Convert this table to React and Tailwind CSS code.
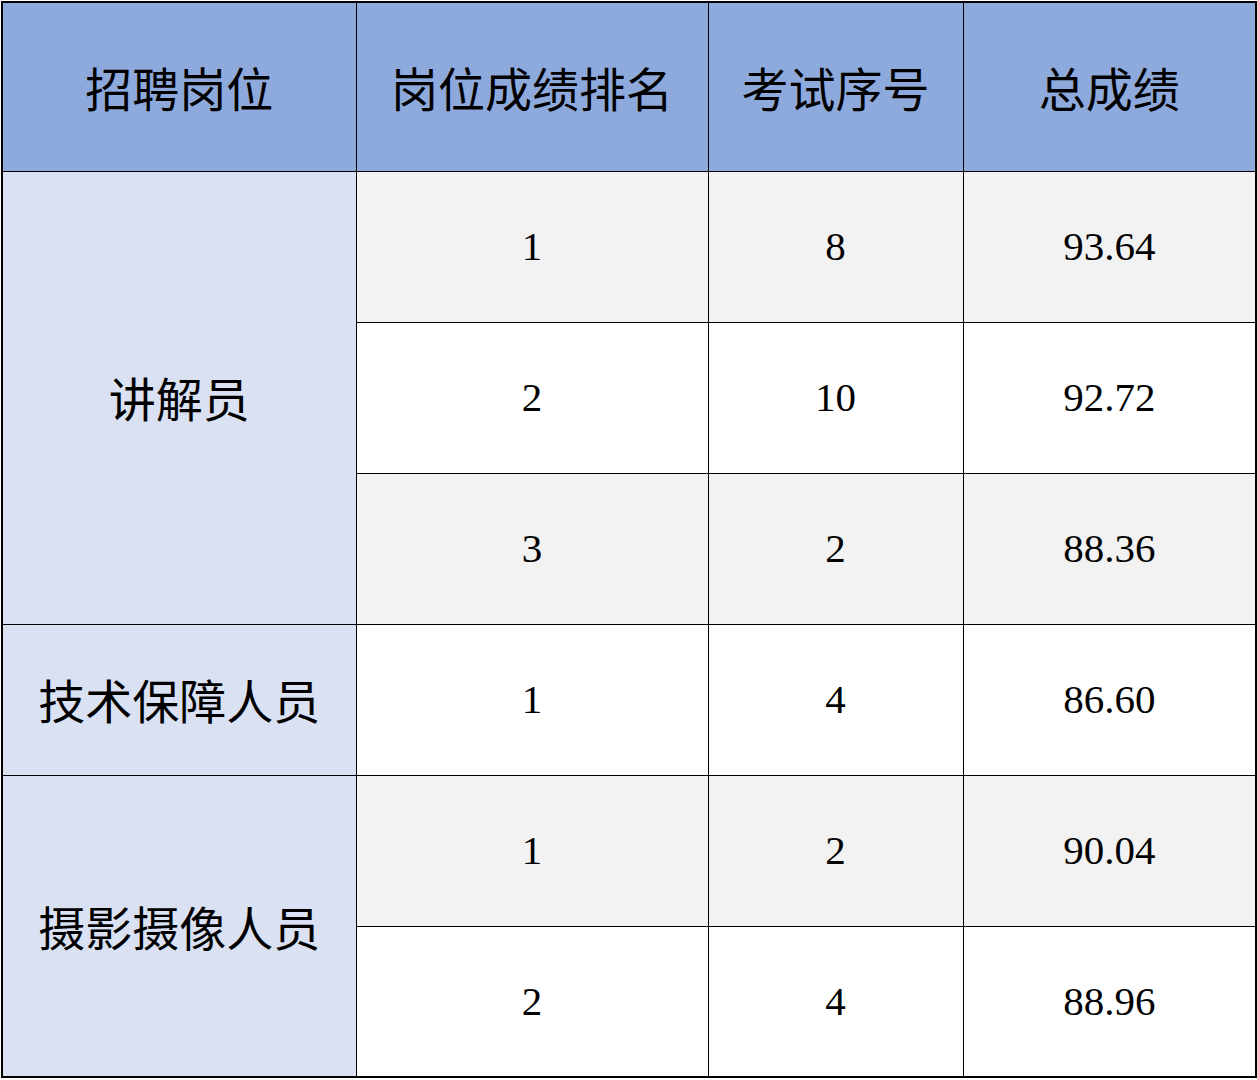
const rows = [
  { job: "讲解员", span: 3, rank: "1", no: "8", score: "93.64", gray: true },
  { rank: "2", no: "10", score: "92.72", gray: false },
  { rank: "3", no: "2", score: "88.36", gray: true },
  { job: "技术保障人员", span: 1, rank: "1", no: "4", score: "86.60", gray: false },
  { job: "摄影摄像人员", span: 2, rank: "1", no: "2", score: "90.04", gray: true },
  { rank: "2", no: "4", score: "88.96", gray: false },
];

const cjk = "font-['Noto_Sans_CJK_SC','Noto_Sans',sans-serif]";
const num = "border border-black text-center text-[41px] font-['Liberation_Serif',serif]";

export default function App() {
  return (
    <div className="w-[1257px] h-[1080px] bg-white pl-[1px] pt-[1px]">
      <table className="w-[1254px] table-fixed border-collapse border-2 border-black text-black">
        <colgroup>
          <col className="w-[354px]" />
          <col className="w-[352px]" />
          <col className="w-[255px]" />
          <col className="w-[293px]" />
        </colgroup>
        <thead>
          <tr className={`h-[169px] bg-[#8ea9db] text-[47px] ${cjk}`}>
            <th className="border border-black font-normal">招聘岗位</th>
            <th className="border border-black font-normal">岗位成绩排名</th>
            <th className="border border-black font-normal">考试序号</th>
            <th className="border border-black font-normal">总成绩</th>
          </tr>
        </thead>
        <tbody>
          {rows.map((r, i) => (
            <tr key={i} className={`h-[151px] ${r.gray ? "bg-[#f2f2f2]" : "bg-white"}`}>
              {r.job && (
                <td rowSpan={r.span} className={`border border-black bg-[#d9e1f2] text-center text-[47px] ${cjk}`}>
                  {r.job}
                </td>
              )}
              <td className={num}>{r.rank}</td>
              <td className={num}>{r.no}</td>
              <td className={num}>{r.score}</td>
            </tr>
          ))}
        </tbody>
      </table>
    </div>
  );
}
